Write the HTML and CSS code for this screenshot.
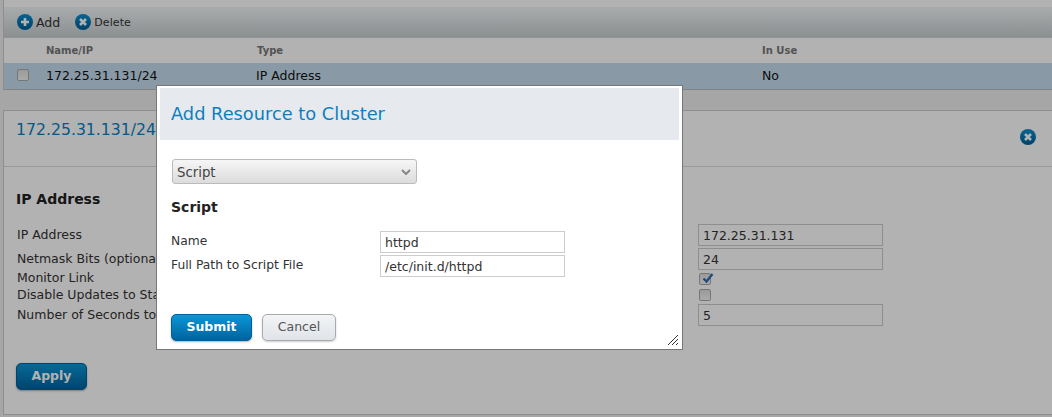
FILE: index.html
```html
<!DOCTYPE html>
<html>
  <head>
    <title>Add Resource to Cluster</title>
    <link rel="stylesheet" href="styles.css">
  </head>

  <body>
    <div class="list-panel">
      <div class="toolbar">
        <span class="tool">
          <svg class="icon" viewBox="0 0 16 16"><use href="#round"></use><path class="glyph" d="M8 4v8M4 8h8"></path></svg>
          <span class="tool-add">Add</span>
        </span>
        <span class="tool">
          <svg class="icon" viewBox="0 0 16 16"><use href="#round"></use><path class="glyph" d="M5 5l6 6M11 5l-6 6"></path></svg>
          <span class="tool-delete">Delete</span>
        </span>
      </div>
      <div class="list-row list-head">
        <span>Name/IP</span>
        <span>Type</span>
        <span>In Use</span>
      </div>
      <div class="list-row list-selected">
        <span class="box list-box"></span>
        <span>172.25.31.131/24</span>
        <span>IP Address</span>
        <span>No</span>
      </div>
    </div>

    <div class="detail-panel">
      <div class="detail-head">
        <h2>172.25.31.131/24</h2>
        <svg class="icon" viewBox="0 0 16 16"><use href="#round"></use><path class="glyph" d="M5 5l6 6M11 5l-6 6"></path></svg>
      </div>
      <div class="detail-body">
        <h3>IP Address</h3>
        <div class="fields">
          <label class="field-text">IP Address</label>
          <input class="text-input" type="text" value="172.25.31.131">
          <label class="field-text">Netmask Bits (optional)</label>
          <input class="text-input" type="text" value="24">
          <label>Monitor Link</label>
          <span class="box checked">
            <svg viewBox="0 0 16 14"><path d="M2 7l4 4 8-10"></path></svg>
          </span>
          <label class="field-low">Disable Updates to Static Routes</label>
          <span class="box"></span>
          <label class="field-text">Number of Seconds to</label>
          <input class="text-input" type="text" value="5">
        </div>
        <button class="btn btn-primary btn-apply">Apply</button>
      </div>
    </div>

    <div class="overlay"></div>

    <div class="modal">
      <div class="modal-head">Add Resource to Cluster</div>
      <div class="modal-body">
        <div class="select-box">
          <span>Script</span>
          <svg viewBox="0 0 10 6"><path d="M1 1l4 4 4-4"></path></svg>
        </div>
        <h3>Script</h3>
        <div class="modal-fields">
          <label>Name</label>
          <input class="text-input" type="text" value="httpd">
          <label>Full Path to Script File</label>
          <input class="text-input" type="text" value="/etc/init.d/httpd">
        </div>
        <div class="modal-actions">
          <button class="btn btn-primary">Submit</button>
          <button class="btn btn-cancel">Cancel</button>
        </div>
      </div>
      <svg class="resizer" viewBox="0 0 12 12"><path d="M1 11L11 1M5 11l6-6M9 11l2-2"></path></svg>
    </div>

    <svg class="defs" width="0" height="0">
      <defs>
        <linearGradient id="roundFill" x1="0" y1="0" x2="0" y2="1">
          <stop offset="0" stop-color="#0a8fd2"></stop>
          <stop offset="1" stop-color="#005f96"></stop>
        </linearGradient>
        <circle id="round" cx="8" cy="8" r="8" fill="url(#roundFill)"></circle>
      </defs>
    </svg>
  </body>
</html>
```

FILE: styles.css
```css
html,
body {
  height: 100%;
}

body {
  font-family: "DejaVu Sans", sans-serif;
  font-size: 12.5px;
  color: #333;
  margin: 0;
  padding: 0 0 0 3px;
  box-sizing: border-box;
  background-color: #eeeeee;
  overflow: hidden;
}

h2,
h3 {
  margin: 0;
  font-weight: normal;
}

.defs {
  position: absolute;
}

.icon {
  width: 16px;
  height: 16px;
  flex: none;
}

.glyph {
  fill: none;
  stroke: #fff;
  stroke-width: 2.6;
}

.list-panel {
  background-color: #fff;
  border-left: 1px solid #ccc;
  border-bottom: 1px solid #bbb;
  padding-top: 7px;
  height: 82px;
}

.toolbar {
  display: flex;
  align-items: center;
  gap: 15px;
  height: 30px;
  padding-left: 13px;
  background: linear-gradient(#f2f6f8, #c9ced0);
  border-bottom: 1px solid #d0d4d6;
}

.tool {
  display: flex;
  align-items: center;
  gap: 3px;
  color: #333;
}

.tool-delete {
  font-size: 11px;
  letter-spacing: 0.1px;
}

.list-row {
  display: grid;
  align-items: center;
}

.list-head {
  grid-template-columns: 42px 211px 505px 1fr;
  height: 25px;
  font-size: 10px;
  font-weight: bold;
  color: #777;
  background-color: #fff;
}

.list-head span:first-child {
  grid-column: 2;
}

.list-selected {
  grid-template-columns: 42px 210px 506px 1fr;
  height: 26px;
  padding-bottom: 2px;
  box-sizing: border-box;
  background-color: #c5ddee;
  color: #111;
}

.list-box {
  margin-left: 13px;
}

.box {
  display: block;
  position: relative;
  width: 10px;
  height: 10px;
  border: 1px solid #aaa;
  border-radius: 2px;
  background: linear-gradient(#ddd, #f4f4f4);
}

.checked svg {
  position: absolute;
  left: 2px;
  top: -1px;
  width: 12px;
  height: 11px;
  fill: none;
  stroke: #2a6db0;
  stroke-width: 3;
}

.detail-panel {
  margin-top: 20px;
  height: 305px;
  background-color: #fff;
  border: 1px solid #ccc;
  border-right: 0;
  box-sizing: border-box;
}

.detail-head {
  display: flex;
  align-items: center;
  justify-content: space-between;
  height: 55px;
  padding: 0 16px 0 12px;
  border-bottom: 1px solid #ddd;
}

.detail-head h2 {
  font-size: 15.7px;
  color: #0a7fc2;
  margin-bottom: 18px;
}

.detail-head .icon {
  margin-bottom: 4px;
}

.detail-body {
  padding: 24px 0 0 12px;
}

.detail-body h3 {
  font-size: 14px;
  font-weight: bold;
  color: #222;
  margin-bottom: 17px;
}

.fields {
  display: grid;
  grid-template-columns: 682px 185px;
  grid-template-rows: 24px 24px 16px 16px 24px;
}

.fields label {
  white-space: nowrap;
  line-height: 16px;
  margin: -2px 0 0 1px;
}

.fields .box {
  margin: 1px 0 0 1px;
}

.fields .field-low {
  margin-top: -1px;
}

.fields .field-text {
  align-self: center;
  margin-top: 0;
  padding-bottom: 3px;
}

.text-input {
  width: 100%;
  height: 22px;
  padding: 0 4px;
  box-sizing: border-box;
  border: 1px solid #ccc;
  background-color: #fff;
  font-family: "DejaVu Sans", sans-serif;
  font-size: 12.5px;
  color: #333;
}

.btn {
  font-family: "DejaVu Sans", sans-serif;
  font-size: 12.5px;
  height: 27px;
  padding: 0 0 2px;
  border-radius: 5px;
  cursor: pointer;
}

.btn-primary {
  font-weight: bold;
  color: #fff;
  border: 1px solid #00609a;
  background: linear-gradient(#0a97d8, #00639e);
  box-shadow: 0 1px 2px rgba(0, 0, 0, 0.3);
}

.btn-apply {
  display: block;
  width: 71px;
  margin-top: 35px;
}

.btn-cancel {
  width: 74px;
  color: #555;
  border: 1px solid #aaa;
  background: linear-gradient(#f2f4f6, #e0e4e8);
  box-shadow: 0 1px 2px rgba(0, 0, 0, 0.2);
}

.overlay {
  position: absolute;
  inset: 0;
  background-color: rgba(0, 0, 0, 0.3);
}

.modal {
  position: absolute;
  left: 156px;
  top: 85px;
  width: 527px;
  height: 265px;
  box-sizing: border-box;
  background-color: #fff;
  border: 1px solid #777;
  padding: 2px 3px 0;
}

.modal-head {
  height: 52px;
  padding-left: 11px;
  line-height: 52px;
  font-size: 17.8px;
  color: #0a7fc2;
  background-color: #e6eaee;
}

.modal-body {
  padding: 19px 0 0 12px;
}

.select-box {
  display: flex;
  align-items: center;
  justify-content: space-between;
  width: 245px;
  height: 25px;
  padding: 1px 5px 0 4px;
  box-sizing: border-box;
  border: 1px solid #bbb;
  border-radius: 3px;
  background: linear-gradient(#f6f6f6, #dcdcdc);
  font-size: 13.3px;
  color: #444;
}

.select-box svg {
  width: 10px;
  height: 6px;
  fill: none;
  stroke: #888;
  stroke-width: 2;
}

.modal-body h3 {
  font-size: 14px;
  font-weight: bold;
  color: #222;
  margin: 15px 0 16px -1px;
}

.modal-fields {
  display: grid;
  grid-template-columns: 208px 185px;
  row-gap: 2px;
  align-items: center;
}

.modal-fields label {
  font-size: 12.3px;
  margin-left: -1px;
  padding-bottom: 2px;
}

.modal-actions {
  display: flex;
  gap: 10px;
  margin: 37px 0 0 -1px;
}

.modal-actions .btn-primary {
  width: 81px;
}

.resizer {
  position: absolute;
  right: 3px;
  bottom: 3px;
  width: 12px;
  height: 12px;
  fill: none;
  stroke: #333;
  stroke-width: 1;
}
```
